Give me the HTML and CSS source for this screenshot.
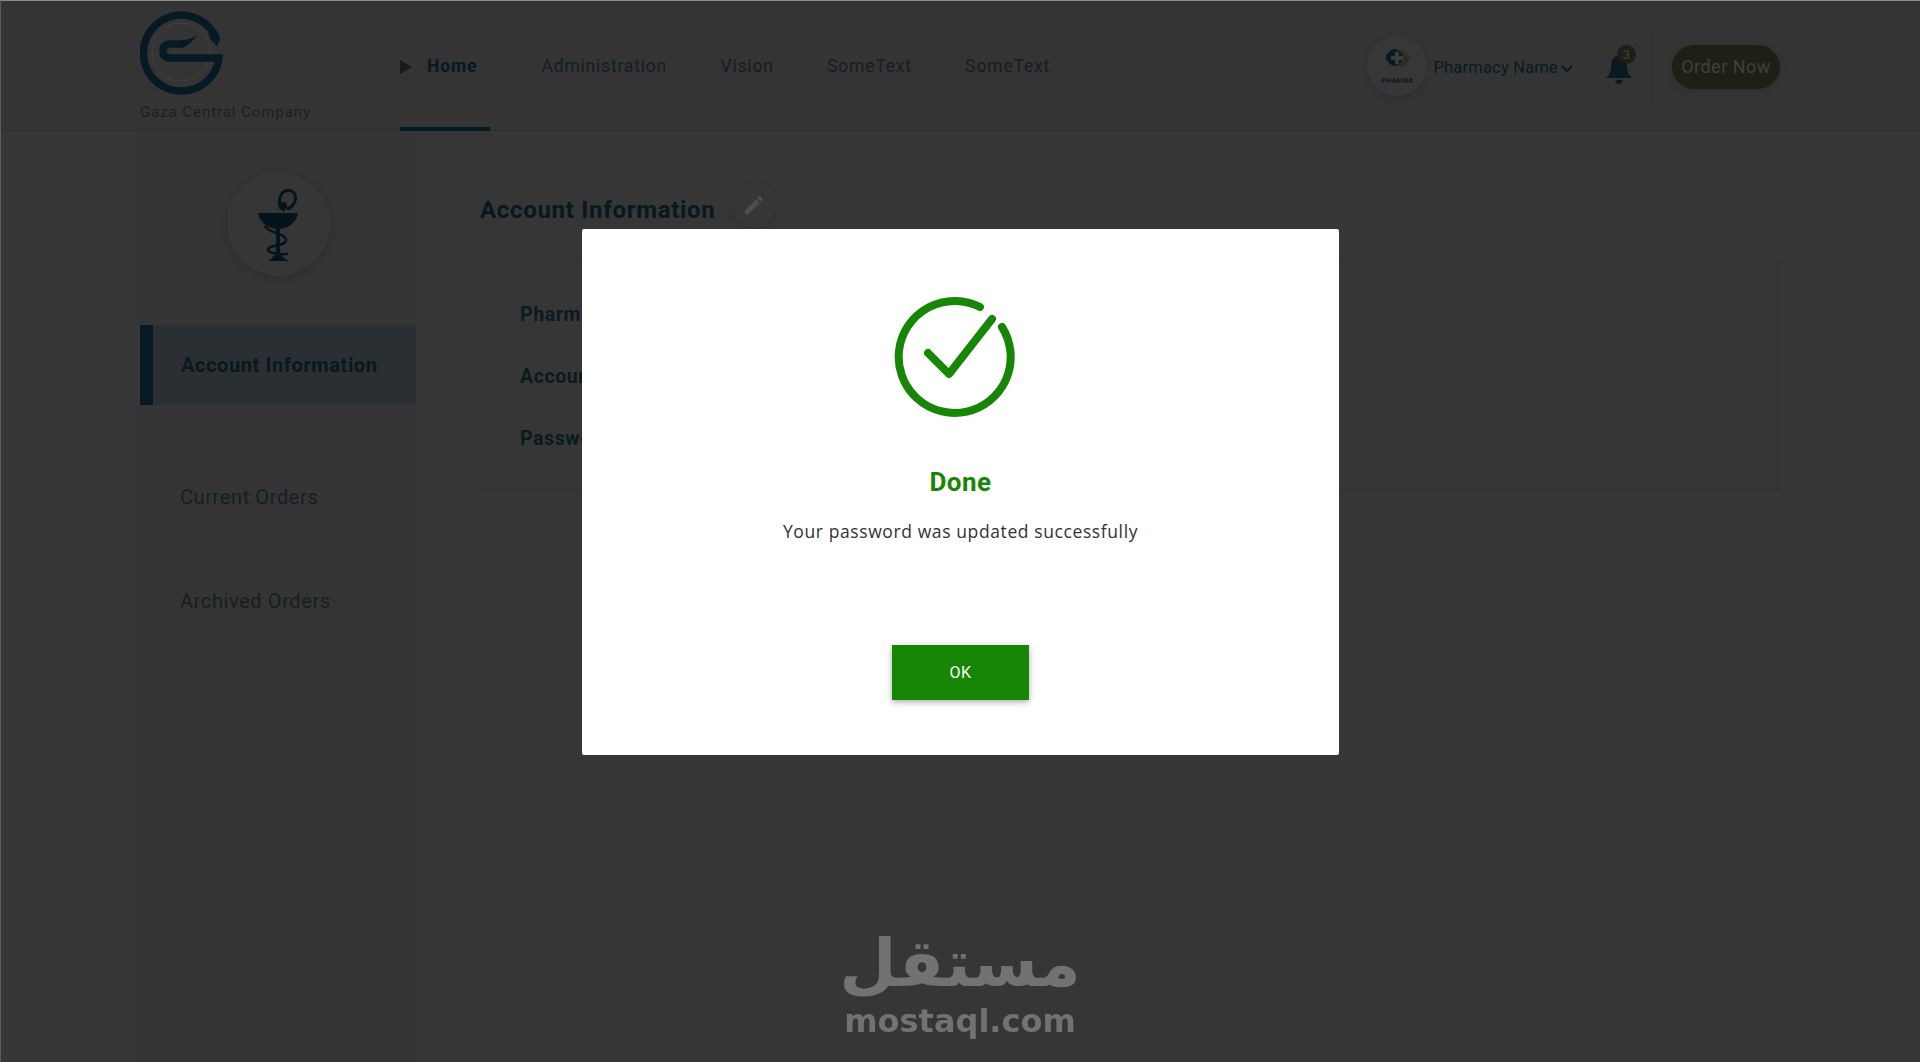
FILE: index.html
```html
<!DOCTYPE html>
<html lang="en">
<head>
    <meta charset="UTF-8">
    <meta name="viewport" content="width=device-width, initial-scale=1.0">
    <title>Account Information</title>
    <link rel="stylesheet" href="styles.css">
</head>
<body>
    <header class="topbar">
        <div class="brand">
            <svg class="brand-logo" width="84" height="86" viewBox="0 0 84 86">
                <circle cx="41" cy="43" r="29" fill="none" stroke="#404040" stroke-width="1"/>
                <path d="M77 31 A38 38 0 1 0 79 49 H31 Q23 49 23 42 Q23 35 31 35 H44" fill="none" stroke="#071a24" stroke-width="7.500"/>
                <path d="M40 31.500 Q50 31 57 26 Q53 33 44 38.500 Z" fill="#071a24"/>
                <path d="M68 22 L80 31 L77 37 L70 30 Z" fill="#071a24"/>
            </svg>
            <span class="brand-name">Gaza Central Company</span>
        </div>
        <nav class="nav">
            <a class="nav-link active">
                <svg class="nav-arrow" width="12" height="14" viewBox="0 0 12 14"><path d="M0 0 L12 7 L0 14 Z" fill="#141d18"/></svg>
                Home
            </a>
            <a class="nav-link">Administration</a>
            <a class="nav-link">Vision</a>
            <a class="nav-link">SomeText</a>
            <a class="nav-link">SomeText</a>
        </nav>
        <div class="user">
            <div class="pharma-badge">
                <svg width="28" height="26" viewBox="0 0 28 26">
                    <rect x="10" y="6" width="15" height="15" rx="5" transform="rotate(45 17.500 13.500)" fill="#2b2e22"/>
                    <rect x="4" y="5" width="15" height="15" rx="5" transform="rotate(45 11.500 12.500)" fill="#071a24"/>
                    <path d="M12 7 H16 V11 H20 V15 H16 V19 H12 V15 H8 V11 H12 Z" fill="#3b3b3b"/>
                </svg>
                <span class="pharma-text">PHARMA</span>
            </div>
            <span class="user-name">Pharmacy Name</span>
            <svg class="chevron" width="12" height="8" viewBox="0 0 12 8"><path d="M1 1 L6 6 L11 1" fill="none" stroke="#0a1a22" stroke-width="2"/></svg>
            <div class="bell">
                <svg width="26" height="30" viewBox="0 0 26 30">
                    <path d="M13 2 C7 2 5 7 5 12 C5 18 3 21 0 24 H26 C23 21 21 18 21 12 C21 7 19 2 13 2 Z M9 26 H17 Q16 30 13 30 Q10 30 9 26 Z" fill="#0a1a22"/>
                </svg>
                <span class="bell-count">3</span>
            </div>
            <span class="divider"></span>
            <button class="order-btn">Order Now</button>
        </div>
    </header>

    <div class="page">
        <aside class="sidebar">
            <div class="side-avatar">
                <svg width="50" height="78" viewBox="0 0 50 78">
                    <path d="M31 24 C25 23 24 16 27 9 C30 3 39 3 41 9 C43 15 38 22 33 23" fill="none" stroke="#05141c" stroke-width="3"/>
                    <circle cx="29" cy="20" r="4" fill="#05141c"/>
                    <path d="M4 27 H44 L43 31 C40 38 33 43 24 43 C15 43 8 38 5 31 Z" fill="#05141c"/>
                    <path d="M22 43 H26 V70 H22 Z" fill="#05141c"/>
                    <path d="M11 40 C13 47 32 47 32 54 C32 61 14 58 14 64 C14 67 24 68 34 68" fill="none" stroke="#05141c" stroke-width="2.500"/>
                    <path d="M13 75 Q18 74 20 69 H28 Q30 74 36 75 Z" fill="#05141c"/>
                </svg>
            </div>
            <ul class="side-menu">
                <li class="side-item active">Account Information</li>
                <li class="side-item">Current Orders</li>
                <li class="side-item">Archived Orders</li>
            </ul>
        </aside>
        <main class="content">
            <div class="content-head">
                <h1 class="content-title">Account Information</h1>
                <span class="edit-btn">
                    <svg width="24" height="24" viewBox="0 0 24 24"><path d="M3 17.250V21h3.750L17.810 9.940l-3.750-3.750L3 17.250zM20.710 7.040a1 1 0 0 0 0-1.410l-2.340-2.340a1 1 0 0 0-1.410 0l-1.830 1.830 3.750 3.750 1.830-1.830z" fill="#4c5044"/></svg>
                </span>
            </div>
            <section class="info-card">
                <p class="info-label">Pharmacy Name</p>
                <p class="info-label">Account Name</p>
                <p class="info-label">Password</p>
            </section>
        </main>
    </div>

    <div class="overlay">
        <div class="modal">
            <svg class="modal-check" width="124" height="124" viewBox="0 0 124 124">
                <path d="M88 14 A56 56 0 1 0 110 34" fill="none" stroke="#178505" stroke-width="8" stroke-linecap="round"/>
                <path d="M36 60 L57 81 L100 26" fill="none" stroke="#178505" stroke-width="8" stroke-linecap="round" stroke-linejoin="round"/>
            </svg>
            <h2 class="modal-title">Done</h2>
            <p class="modal-text">Your password was updated successfully</p>
            <button class="modal-btn">OK</button>
        </div>
    </div>

    <div class="watermark">
        <span class="watermark-ar" lang="ar" dir="rtl">مستقل</span>
        <span class="watermark-en">mostaql.com</span>
    </div>
</body>
</html>
```

FILE: styles.css
```css
* {
    box-sizing: border-box;
}
html, body {
    margin: 0;
    height: 1062px;
    overflow: hidden;
}
body {
    background-color: #363636;
    border-top: 1px solid #8b8b8b;
    border-left: 1px solid #5a5a5a;
    font-family: Roboto, "Liberation Sans", sans-serif;
    color: #0a1a22;
}

/* top bar */
.topbar {
    height: 130px;
    padding: 0 140px 0 139px;
    display: flex;
    border-bottom: 1px solid #2e2e2e;
    background-color: #343434;
}
.brand {
    width: 260px;
    display: flex;
    flex-direction: column;
}
.brand-logo {
    margin-top: 8px;
}
.brand-name {
    margin-top: 8px;
    font-size: 15px;
    letter-spacing: 0.93px;
    color: #1e2019;
}
.nav {
    display: flex;
    gap: 53.500px;
}
.nav-link {
    height: 130px;
    padding-top: 55px;
    font-size: 17.500px;
    letter-spacing: 0.8px;
    color: #141e22;
    white-space: nowrap;
}
.nav-link.active {
    display: flex;
    align-items: flex-start;
    gap: 15px;
    width: 90px;
    margin-right: -2px;
    font-weight: 700;
    letter-spacing: 0.9px;
    color: #071820;
    border-bottom: 4px solid #071a24;
}
.nav-arrow {
    margin-top: 4px;
    flex: none;
}
.user {
    margin-left: auto;
    display: flex;
    align-items: center;
    height: 130px;
}
.pharma-badge {
    width: 60px;
    height: 60px;
    border-radius: 50%;
    background-color: #373737;
    box-shadow: 0 2px 5px #2f2f2f;
    display: flex;
    flex-direction: column;
    align-items: center;
    padding-top: 9px;
}
.pharma-text {
    font-size: 7px;
    font-weight: 700;
    letter-spacing: 0.4px;
    margin-top: 6px;
    color: #071a24;
}
.user-name {
    margin-left: 6px;
    margin-top: 2px;
    font-size: 16.500px;
    letter-spacing: 0.2px;
    color: #0a1a22;
    white-space: nowrap;
}
.chevron {
    margin: 6px 0 0 3px;
}
.bell {
    position: relative;
    margin-left: 33px;
    width: 26px;
    height: 30px;
    margin-top: 6px;
}
.bell svg {
    display: block;
}
.bell-count {
    position: absolute;
    top: -9px;
    right: -4px;
    width: 19px;
    height: 19px;
    border-radius: 50%;
    background-color: #1e2016;
    color: #40403a;
    font-size: 13px;
    line-height: 19px;
    text-align: center;
}
.divider {
    width: 1px;
    height: 70px;
    margin-left: 20px;
    background-color: #2f2f2f;
}
.order-btn {
    width: 108px;
    height: 44px;
    margin-left: 19px;
    margin-top: 1px;
    border: none;
    border-radius: 22px;
    background-color: #1e2016;
    box-shadow: 0 2px 5px #2f2f2f;
    color: #40403a;
    font-family: Roboto, sans-serif;
    font-size: 18px;
    letter-spacing: 0.5px;
}

/* page */
.page {
    display: flex;
    padding-left: 139px;
    height: 931px;
}
.sidebar {
    width: 276px;
    background-color: #343434;
}
.side-avatar {
    width: 103px;
    height: 104px;
    margin: 41px 0 0 87px;
    border-radius: 50%;
    background-color: #363636;
    box-shadow: 0 2px 5px #2e2e2e;
    display: flex;
    justify-content: center;
    padding-top: 14px;
}
.side-menu {
    list-style: none;
    margin: 49px 0 0;
    padding: 0;
}
.side-item {
    height: 80px;
    line-height: 80px;
    margin-bottom: 24px;
    padding-left: 40px;
    font-size: 20px;
    letter-spacing: 0.6px;
    color: #161f22;
}
.side-item.active {
    padding-left: 28px;
    margin-bottom: 52px;
    border-left: 13px solid #071a24;
    background-color: #2b2f32;
    font-weight: 700;
    color: #071820;
}
.content {
    flex: 1;
    padding: 51px 141px 0 64px;
}
.content-head {
    display: flex;
    align-items: center;
    gap: 16px;
    height: 46px;
}
.content-title {
    margin: 10px 0 0;
    font-size: 24px;
    letter-spacing: 0.7px;
    font-weight: 700;
    color: #071820;
}
.edit-btn {
    width: 46px;
    height: 46px;
    border-radius: 50%;
    background-color: #363636;
    box-shadow: 0 1px 3px #303030;
    display: flex;
    align-items: center;
    justify-content: center;
}
.info-card {
    height: 229px;
    margin-top: 33px;
    padding: 41px 39px 0;
    border: 1px solid #323232;
    background-color: #363636;
}
.info-label {
    margin: 0 0 39px;
    font-size: 19.500px;
    line-height: 23px;
    font-weight: 700;
    letter-spacing: 0.6px;
    color: #0a1a22;
}

/* modal */
.overlay {
    position: fixed;
    top: 0;
    left: 0;
    right: 0;
    bottom: 0;
    display: flex;
    justify-content: center;
    padding-top: 229px;
    padding-left: 1px;
}
.modal {
    width: 757px;
    height: 526px;
    background-color: #fff;
    border-radius: 2px;
    display: flex;
    flex-direction: column;
    align-items: center;
}
.modal-check {
    margin: 64px 13px 0 0;
}
.modal-title {
    margin: 50px 0 0;
    font-size: 26px;
    line-height: 30px;
    font-weight: 700;
    letter-spacing: 0.5px;
    color: #178505;
}
.modal-text {
    margin: 22px 0 0;
    font-family: "Open Sans", "Noto Sans", sans-serif;
    font-size: 17.500px;
    line-height: 24px;
    letter-spacing: 0.6px;
    color: #333;
}
.modal-btn {
    width: 137px;
    height: 55px;
    margin-top: 102px;
    border: none;
    background-color: #178505;
    box-shadow: 0 2px 6px #aaa;
    color: #fff;
    font-family: Roboto, sans-serif;
    font-size: 16px;
    font-weight: 400;
    letter-spacing: 0.5px;
}

/* watermark */
.watermark {
    position: fixed;
    left: 845px;
    top: 925px;
    width: 230px;
    display: flex;
    flex-direction: column;
    align-items: center;
    color: #727272;
}
.watermark-ar {
    font-family: "DejaVu Sans", sans-serif;
    font-weight: 700;
    font-size: 66px;
    line-height: 78px;
}
.watermark-en {
    font-family: "DejaVu Sans", sans-serif;
    font-weight: 700;
    font-size: 32px;
    line-height: 36px;
}
```
